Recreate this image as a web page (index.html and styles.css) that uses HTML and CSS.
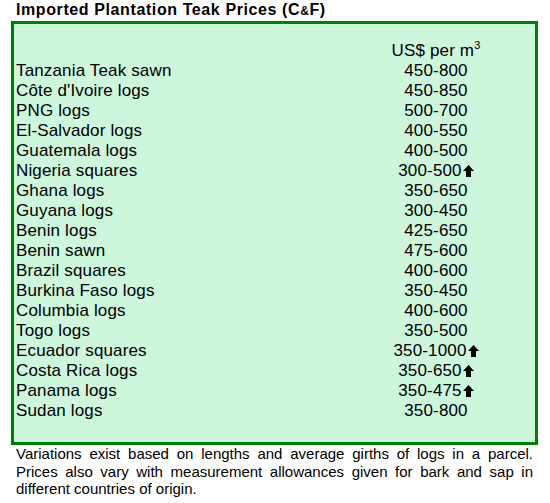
FILE: index.html
```
<!DOCTYPE html>
<html>
<head>
<meta charset="utf-8">
<link rel="stylesheet" href="styles.css">
</head>
<body>
<div class="page">
  <h1 class="title">Imported Plantation Teak Prices (C<span class="amp">&amp;</span>F)</h1>
  <div class="box">
    <div class="grid">
      <div class="label"></div><div class="value">US$ per m<sup>3</sup></div>
      <div class="label">Tanzania Teak sawn</div><div class="value">450-800</div>
      <div class="label">Côte d'Ivoire logs</div><div class="value">450-850</div>
      <div class="label">PNG logs</div><div class="value">500-700</div>
      <div class="label">El-Salvador logs</div><div class="value">400-550</div>
      <div class="label">Guatemala logs</div><div class="value">400-500</div>
      <div class="label">Nigeria squares</div><div class="value">300-500<svg class="up" viewBox="0 0 11 12"><path d="M5.5 0 L11 6 L8 6 L8 12 L3 12 L3 6 L0 6 Z"/></svg></div>
      <div class="label">Ghana logs</div><div class="value">350-650</div>
      <div class="label">Guyana logs</div><div class="value">300-450</div>
      <div class="label">Benin logs</div><div class="value">425-650</div>
      <div class="label">Benin sawn</div><div class="value">475-600</div>
      <div class="label">Brazil squares</div><div class="value">400-600</div>
      <div class="label">Burkina Faso logs</div><div class="value">350-450</div>
      <div class="label">Columbia logs</div><div class="value">400-600</div>
      <div class="label">Togo logs</div><div class="value">350-500</div>
      <div class="label">Ecuador squares</div><div class="value">350-1000<svg class="up" viewBox="0 0 11 12"><path d="M5.5 0 L11 6 L8 6 L8 12 L3 12 L3 6 L0 6 Z"/></svg></div>
      <div class="label">Costa Rica logs</div><div class="value">350-650<svg class="up" viewBox="0 0 11 12"><path d="M5.5 0 L11 6 L8 6 L8 12 L3 12 L3 6 L0 6 Z"/></svg></div>
      <div class="label">Panama logs</div><div class="value">350-475<svg class="up" viewBox="0 0 11 12"><path d="M5.5 0 L11 6 L8 6 L8 12 L3 12 L3 6 L0 6 Z"/></svg></div>
      <div class="label">Sudan logs</div><div class="value">350-800</div>
    </div>
  </div>
  <p class="note">Variations exist based on lengths and average girths of logs in a parcel. Prices also vary with measurement allowances given for bark and sap in different countries of origin.</p>
</div>
</body>
</html>
```
FILE: styles.css
```
html, body {
  margin: 0;
  padding: 0;
  background: #ffffff;
}
body {
  font-family: "Liberation Sans", Arial, sans-serif;
  color: #000000;
}
.page {
  width: 527px;
  margin-left: 11px;
  padding-top: 1px;
}
.title {
  margin: 0 0 1px 0;
  padding-left: 5px;
  font-size: 16px;
  font-weight: bold;
  letter-spacing: 0.6px;
  line-height: 17px;
  color: #000;
  white-space: nowrap;
}
.amp {
  font-size: 12px;
}
.box {
  border: 3px solid #008000;
  background: #cdf6dc;
  padding: 17px 0 21px 2px;
}
.grid {
  display: grid;
  grid-template-columns: 330px 180px;
  font-size: 17px;
  letter-spacing: 0.15px;
  line-height: 20px;
}
.value {
  text-align: center;
  white-space: nowrap;
}
.value sup {
  font-size: 11px;
  line-height: 0;
  vertical-align: 7px;
}
.up {
  width: 11px;
  height: 12px;
  margin-left: 1px;
  vertical-align: -1px;
  fill: #000;
}
.note {
  margin: 0;
  padding: 0 5px;
  font-size: 15px;
  line-height: 17.5px;
  text-align: justify;
}
```
